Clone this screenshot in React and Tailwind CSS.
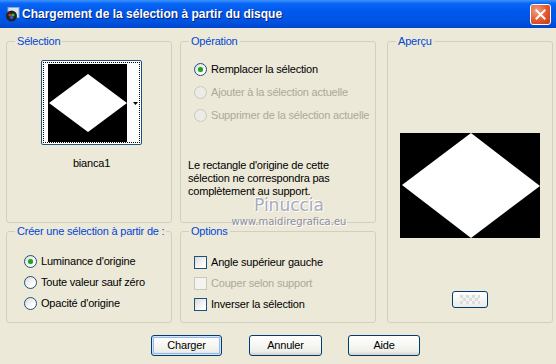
import React from 'react';

const font = { fontFamily: '"Liberation Sans", Arial, sans-serif' };

const Radio = ({ checked, disabled, label }) => (
  <div className="flex items-center h-[13px] gap-[4px] whitespace-nowrap">
    <span
      className={`shrink-0 w-[13px] h-[13px] rounded-full border flex items-center justify-center ${
        disabled ? 'border-[#cac8bb] bg-[#ecebe6]' : 'border-[#1c5180] bg-[linear-gradient(135deg,#dcdad3,#ffffff_70%)]'
      }`}
    >
      {checked && <span className="w-[5px] h-[5px] rounded-full bg-[#21a121] shadow-[0_0_1px_#7ce07c]" />}
    </span>
    <span className={disabled ? 'text-[#aca899]' : 'text-black'}>{label}</span>
  </div>
);

const Check = ({ disabled, label }) => (
  <div className="flex items-center h-[13px] gap-[4px] whitespace-nowrap">
    <span
      className={`shrink-0 w-[13px] h-[13px] border ${
        disabled ? 'border-[#cac8bb] bg-[#f4f3ee]' : 'border-[#1c5180] bg-[linear-gradient(135deg,#dcdad3,#ffffff_80%)]'
      }`}
    />
    <span className={disabled ? 'text-[#aca899]' : 'text-black'}>{label}</span>
  </div>
);

const Group = ({ title, className, children }) => (
  <fieldset className={`border border-[#d0d0bf] rounded-[3px] min-w-0 ${className}`}>
    <legend className="ml-[8px] px-[2px] text-[#0046d5] leading-[13px] whitespace-nowrap">{title}</legend>
    {children}
  </fieldset>
);

const XpButton = ({ label, primary }) => (
  <button
    className={`h-[21px] rounded-[3px] border border-[#003c74] bg-[linear-gradient(to_bottom,#ffffff,#f0f0ea_80%,#d6d0c5)] text-black leading-[13px] ${
      primary ? 'shadow-[inset_0_0_0_1px_#cee7ff,inset_0_0_0_2px_#98b8ea]' : ''
    }`}
  >
    {label}
  </button>
);

export default function App() {
  return (
    <div className="w-[556px] h-[364px] bg-[#ece9d8] text-[11px] tracking-[-0.2px] relative overflow-hidden" style={font}>
      {/* title bar */}
      <div className="h-[28px] flex items-center pl-[5px] pr-[5px] bg-[linear-gradient(to_bottom,#3d95ff,#0a66f4_12%,#0058ee_40%,#0054e3_75%,#0046cc)]">
        <svg width="15" height="15" viewBox="0 0 15 15" className="mr-[2px]">
          <rect x="3" y="0.5" width="11" height="10" fill="#d9e6f7" stroke="#8ea8c8" />
          <circle cx="6.5" cy="9" r="5.5" fill="#222" />
          <circle cx="5" cy="8" r="1.6" fill="#e03030" />
          <circle cx="8" cy="8" r="1.6" fill="#30c040" />
          <circle cx="6.5" cy="10.5" r="1.6" fill="#3060f0" />
        </svg>
        <span className="text-white font-bold text-[12px] tracking-[0px] [text-shadow:1px_1px_0_#0a1e6a]">
          Chargement de la sélection à partir du disque
        </span>
        <div className="ml-auto w-[21px] h-[21px] rounded-[3px] border border-white bg-[radial-gradient(circle_at_30%_30%,#f0a080,#e2572c_55%,#c43a14)] flex items-center justify-center">
          <svg width="11" height="11" viewBox="0 0 11 11">
            <path d="M1.5 1.5 L9.5 9.5 M9.5 1.5 L1.5 9.5" stroke="white" strokeWidth="2" strokeLinecap="square" />
          </svg>
        </div>
      </div>

      {/* body */}
      <div className="flex pt-[7px] pl-[6px]">
        <div className="grid grid-cols-[166px_196px] grid-rows-[188px_98px] gap-x-[8px] gap-y-[2px]">
          <Group title="Sélection">
            <div className="ml-[34px] mt-[12px] w-[101px] flex flex-col items-center">
              <div className="w-[101px] h-[85px] border border-[#1c5180] rounded-[2px] bg-white p-[1px]">
                <div className="w-full h-full border border-dotted border-black flex pl-[4px] pt-[1px]">
                  <svg width="79" height="78" viewBox="0 0 79 78" className="bg-black">
                    <polygon points="1,39 40,10 79,39 40,68" fill="white" />
                  </svg>
                  <div className="flex-1 flex items-center justify-end pr-[1px]">
                    <svg width="5" height="3" viewBox="0 0 5 3">
                      <polygon points="0,0 5,0 2.5,3" fill="black" />
                    </svg>
                  </div>
                </div>
              </div>
              <div className="mt-[12px] leading-[13px]">bianca1</div>
            </div>
          </Group>

          <Group title="Opération">
            <div className="pl-[13px] mt-[15px] flex flex-col gap-[10px]">
              <Radio checked label="Remplacer la sélection" />
              <Radio disabled label="Ajouter à la sélection actuelle" />
              <Radio disabled label="Supprimer de la sélection actuelle" />
            </div>
            <p className="pl-[7px] mt-[37px] leading-[13px] whitespace-nowrap">
              Le rectangle d'origine de cette
              <br />
              sélection ne correspondra pas
              <br />
              complètement au support.
            </p>
          </Group>

          <Group title="Créer une sélection à partir de :">
            <div className="pl-[17px] mt-[17px] flex flex-col gap-[8px]">
              <Radio checked label="Luminance d'origine" />
              <Radio label="Toute valeur sauf zéro" />
              <Radio label="Opacité d'origine" />
            </div>
          </Group>

          <Group title="Options">
            <div className="pl-[13px] mt-[18px] flex flex-col gap-[8px]">
              <Check label="Angle supérieur gauche" />
              <Check disabled label="Couper selon support" />
              <Check label="Inverser la sélection" />
            </div>
          </Group>
        </div>

        <Group title="Aperçu" className="ml-[11px] w-[166px] h-[288px]">
          <div className="flex flex-col items-center">
            <svg width="140" height="105" viewBox="0 0 140 105" className="mt-[85px] bg-black">
              <polygon points="2,52 71,0 140,53 71,105" fill="white" />
            </svg>
            <button className="mt-[53px] w-[36px] h-[17px] rounded-[3px] border border-[#003c74] bg-[linear-gradient(to_bottom,#ffffff,#ecebe6)] flex items-center justify-center">
              <span className="w-[20px] h-[9px] bg-[repeating-conic-gradient(#f4f4f4_0_25%,#dcdcdc_0_50%)] bg-[length:6px_6px]" />
            </button>
          </div>
        </Group>
      </div>

      {/* watermark */}
      <div className="absolute left-[228px] top-[198px] w-[122px] flex flex-col items-center pointer-events-none tracking-[0px]">
        <span className="text-[17px] leading-[14px] text-[#a9aabb] [text-shadow:1px_1px_0_#ffffff,-1px_-1px_0_#ffffff]" style={{ fontFamily: '"DejaVu Sans", sans-serif' }}>
          Pinuccia
        </span>
        <span className="mt-[4px] text-[10px] leading-[12px] text-[#8d8e9e] [text-shadow:1px_1px_0_#ffffff]" style={{ fontFamily: '"DejaVu Sans", sans-serif' }}>
          www.maidiregrafica.eu
        </span>
      </div>

      {/* buttons */}
      <div className="flex pl-[151px] mt-[12px]">
        <div className="w-[71px] flex flex-col"><XpButton primary label="Charger" /></div>
        <div className="ml-[27px] w-[73px] flex flex-col"><XpButton label="Annuler" /></div>
        <div className="ml-[26px] w-[72px] flex flex-col"><XpButton label="Aide" /></div>
      </div>
    </div>
  );
}
